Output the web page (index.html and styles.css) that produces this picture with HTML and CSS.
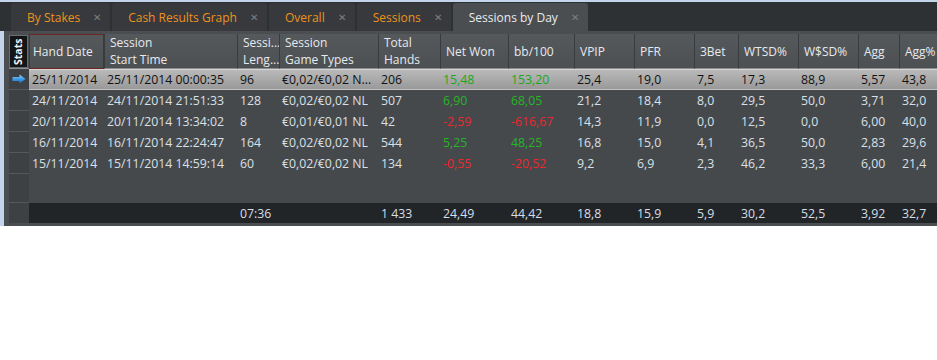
FILE: index.html
```html
<!DOCTYPE html>
<html lang="en">
<head>
    <meta charset="UTF-8">
    <title>Sessions by Day</title>
    <link rel="stylesheet" href="styles.css">
</head>
<body>
    <div class="app">
        <div class="tabbar">
            <div class="tab">By Stakes<span class="close">&#x2715;</span></div>
            <div class="tab">Cash Results Graph<span class="close">&#x2715;</span></div>
            <div class="tab">Overall<span class="close">&#x2715;</span></div>
            <div class="tab">Sessions<span class="close">&#x2715;</span></div>
            <div class="tab active">Sessions by Day<span class="close">&#x2715;</span></div>
        </div>

        <div class="panel">
            <table class="grid">
                <colgroup>
                    <col class="c-head">
                    <col class="c-date">
                    <col class="c-start">
                    <col class="c-len">
                    <col class="c-types">
                    <col class="c-hands">
                    <col class="c-won">
                    <col class="c-bb">
                    <col class="c-stat">
                    <col class="c-stat">
                    <col class="c-3bet">
                    <col class="c-stat">
                    <col class="c-stat">
                    <col class="c-agg">
                    <col class="c-aggp">
                </colgroup>
                <thead>
                    <tr>
                        <th class="corner"><span class="stats-tab">Stats</span></th>
                        <th class="sorted">Hand Date</th>
                        <th>Session<br>Start Time</th>
                        <th>Sessi...<br>Leng...</th>
                        <th>Session<br>Game Types</th>
                        <th>Total<br>Hands</th>
                        <th>Net Won</th>
                        <th>bb/100</th>
                        <th>VPIP</th>
                        <th>PFR</th>
                        <th>3Bet</th>
                        <th>WTSD%</th>
                        <th>W$SD%</th>
                        <th>Agg</th>
                        <th>Agg%</th>
                    </tr>
                </thead>
                <tbody>
                    <tr class="selected">
                        <td class="rowhead">
                            <svg width="14" height="10" viewBox="0 0 14 10">
                                <defs>
                                    <linearGradient id="arrowFill" x1="0" y1="0" x2="0" y2="1">
                                        <stop offset="0" stop-color="#9fd3fa"/>
                                        <stop offset="0.5" stop-color="#3c9be6"/>
                                        <stop offset="1" stop-color="#1f6fc0"/>
                                    </linearGradient>
                                </defs>
                                <path d="M0.5 3 H7.5 V0.5 L13.5 5 L7.5 9.5 V7 H0.5 Z" fill="url(#arrowFill)"/>
                            </svg>
                        </td>
                        <td>25/11/2014</td>
                        <td>25/11/2014 00:00:35</td>
                        <td>96</td>
                        <td>€0,02/€0,02 N...</td>
                        <td>206</td>
                        <td class="pos">15,48</td>
                        <td class="pos">153,20</td>
                        <td>25,4</td>
                        <td>19,0</td>
                        <td>7,5</td>
                        <td>17,3</td>
                        <td>88,9</td>
                        <td>5,57</td>
                        <td>43,8</td>
                    </tr>
                    <tr>
                        <td class="rowhead"></td>
                        <td>24/11/2014</td>
                        <td>24/11/2014 21:51:33</td>
                        <td>128</td>
                        <td>€0,02/€0,02 NL</td>
                        <td>507</td>
                        <td class="pos">6,90</td>
                        <td class="pos">68,05</td>
                        <td>21,2</td>
                        <td>18,4</td>
                        <td>8,0</td>
                        <td>29,5</td>
                        <td>50,0</td>
                        <td>3,71</td>
                        <td>32,0</td>
                    </tr>
                    <tr>
                        <td class="rowhead"></td>
                        <td>20/11/2014</td>
                        <td>20/11/2014 13:34:02</td>
                        <td>8</td>
                        <td>€0,01/€0,01 NL</td>
                        <td>42</td>
                        <td class="neg">-2,59</td>
                        <td class="neg">-616,67</td>
                        <td>14,3</td>
                        <td>11,9</td>
                        <td>0,0</td>
                        <td>12,5</td>
                        <td>0,0</td>
                        <td>6,00</td>
                        <td>40,0</td>
                    </tr>
                    <tr>
                        <td class="rowhead"></td>
                        <td>16/11/2014</td>
                        <td>16/11/2014 22:24:47</td>
                        <td>164</td>
                        <td>€0,02/€0,02 NL</td>
                        <td>544</td>
                        <td class="pos">5,25</td>
                        <td class="pos">48,25</td>
                        <td>16,8</td>
                        <td>15,0</td>
                        <td>4,1</td>
                        <td>36,5</td>
                        <td>50,0</td>
                        <td>2,83</td>
                        <td>29,6</td>
                    </tr>
                    <tr>
                        <td class="rowhead"></td>
                        <td>15/11/2014</td>
                        <td>15/11/2014 14:59:14</td>
                        <td>60</td>
                        <td>€0,02/€0,02 NL</td>
                        <td>134</td>
                        <td class="neg">-0,55</td>
                        <td class="neg">-20,52</td>
                        <td>9,2</td>
                        <td>6,9</td>
                        <td>2,3</td>
                        <td>46,2</td>
                        <td>33,3</td>
                        <td>6,00</td>
                        <td>21,4</td>
                    </tr>
                    <tr class="filler">
                        <td class="rowhead"></td>
                        <td colspan="14"></td>
                    </tr>
                </tbody>
                <tfoot>
                    <tr>
                        <td class="rowhead"></td>
                        <td></td>
                        <td></td>
                        <td>07:36</td>
                        <td></td>
                        <td>1 433</td>
                        <td>24,49</td>
                        <td>44,42</td>
                        <td>18,8</td>
                        <td>15,9</td>
                        <td>5,9</td>
                        <td>30,2</td>
                        <td>52,5</td>
                        <td>3,92</td>
                        <td>32,7</td>
                    </tr>
                </tfoot>
            </table>
        </div>
    </div>
</body>
</html>
```

FILE: styles.css
```css
body {
    margin: 0;
    background: #fff;
    font-family: "Open Sans", "Noto Sans", sans-serif;
    font-size: 12px;
}
.app {
    width: 937px;
    height: 226px;
    padding-top: 2px;
    box-sizing: border-box;
    background: #c4d4ea;
    overflow: hidden;
}
.tabbar {
    display: flex;
    align-items: flex-end;
    gap: 2px;
    height: 29px;
    padding-left: 11px;
    background: #2e3134;
}
.tab {
    display: flex;
    align-items: center;
    height: 28px;
    padding: 0 9px 0 16px;
    background: #37393c;
    color: #ee921d;
    border-radius: 3px 3px 0 0;
    white-space: nowrap;
}
.tab.active {
    background: #4b4e51;
    color: #e8ebee;
}
.close {
    margin-left: 13px;
    color: #7c7f82;
    font-size: 10px;
}
.panel {
    margin-left: 4px;
    height: 192px;
    padding: 3px 0 0 5px;
    background: #4b4e51;
    border-bottom: 3px solid #a2a5a8;
    overflow: hidden;
}
.grid {
    border-spacing: 0;
    table-layout: fixed;
    width: 940px;
    line-height: 17px;
}
.c-head { width: 20px; }
.c-date { width: 75px; }
.c-start { width: 133px; }
.c-len { width: 42px; }
.c-types { width: 99px; }
.c-hands { width: 62px; }
.c-won { width: 68px; }
.c-bb { width: 66px; }
.c-stat { width: 60px; }
.c-3bet { width: 44px; }
.c-agg { width: 41px; }
.c-aggp { width: 50px; }
th {
    height: 34px;
    padding: 0 0 0 5px;
    text-align: left;
    font-weight: normal;
    color: #e6eaee;
    background: linear-gradient(#56595c, #4d5053);
    border-left: 1px solid #393c3f;
    border-bottom: 1px solid #8c8f92;
    white-space: nowrap;
    overflow: hidden;
    box-sizing: border-box;
}
th.corner {
    padding: 1px 0 0 0;
    border-left: none;
    background: #4b4e51;
    vertical-align: top;
}
.stats-tab {
    display: block;
    width: 19px;
    height: 33px;
    box-sizing: border-box;
    border: 1px solid #6a6d70;
    background: #141516;
    color: #f2f2f2;
    font-size: 10.5px;
    font-weight: bold;
    line-height: 17px;
    text-align: center;
    writing-mode: vertical-rl;
    transform: rotate(180deg);
}
th.sorted {
    border: 1px solid #6d2424;
    padding-left: 3px;
}
td {
    height: 21px;
    padding: 0 0 0 3px;
    color: #dae0e7;
    background: #46494c;
    font-size: 12.3px;
    white-space: nowrap;
    overflow: hidden;
    box-sizing: border-box;
}
td.rowhead {
    padding: 0;
    background: #3e4144;
    border-bottom: 1px solid #55585b;
    text-align: center;
}
td.rowhead svg {
    display: block;
    margin: 0 auto;
}
.selected td {
    color: #111;
    background: linear-gradient(#b9b9b9, #999);
    border-top: 1px solid #d4d4d4;
    border-bottom: 1px solid #c2c2c2;
}
.selected td.rowhead {
    background: #3e4144;
    border-top: none;
    border-bottom: 1px solid #55585b;
}
.pos { color: #24b624; }
.neg { color: #ea282e; }
.selected .pos { color: #1aa81a; }
.filler td {
    height: 29px;
}
tfoot td {
    height: 20px;
    background: #222528;
    color: #d8dee5;
}
tfoot td.rowhead {
    border-bottom: none;
}
```
